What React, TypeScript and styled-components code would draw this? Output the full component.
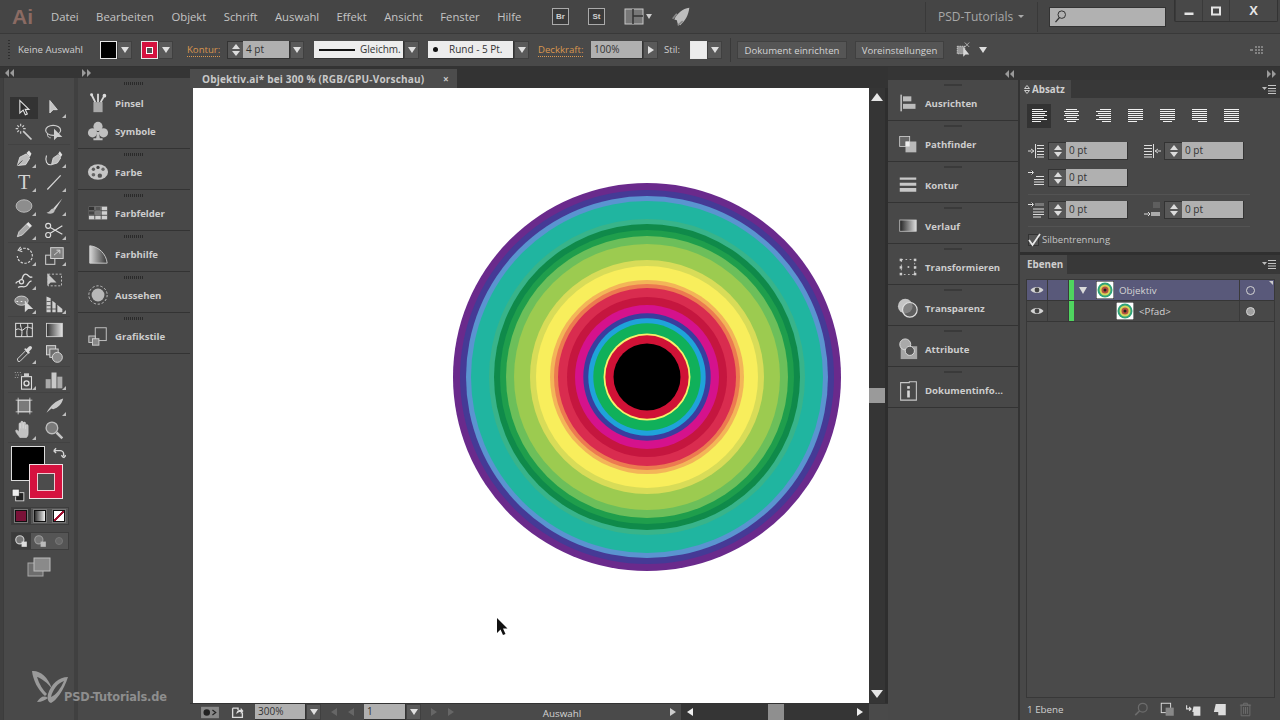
import React from "react";
import styled, { createGlobalStyle } from "styled-components";

const Global = createGlobalStyle`
  html, body { margin: 0; padding: 0; background: #3c3c3c; overflow: hidden; }
  * { box-sizing: border-box; }
`;

const FONT = `"Open Sans", "Noto Sans", "Liberation Sans", sans-serif`;

const Root = styled.div`
  position: relative;
  width: 1280px;
  height: 720px;
  display: flex;
  flex-direction: column;
  overflow: hidden;
  font-family: ${FONT};
  color: #c8c8c8;
  background: #3c3c3c;
`;

/* ---------- menu bar ---------- */
const MenuBar = styled.header`
  height: 33px;
  flex: none;
  display: flex;
  align-items: center;
  background: #454545;
  position: relative;
`;
const AiLogo = styled.span`
  width: 51px;
  padding-left: 12px;
  font: bold 21px "Liberation Sans", sans-serif;
  color: #8b6b63;
  flex: none;
`;
const MenuList = styled.nav`
  display: flex;
  gap: 17.4px;
  font-size: 11.3px;
  color: #c4c4c4;
  width: 487px;
  flex: none;
`;
const BridgeGroup = styled.div`
  display: flex;
  align-items: center;
  gap: 19px;
  width: 387px;
  flex: none;
  padding-left: 14px;
`;
const BadgeIcon = styled.span`
  width: 17px;
  height: 17px;
  border: 1px solid #aaa;
  background: #3a3a3a;
  font: bold 8px "Liberation Sans", sans-serif;
  color: #cfcfcf;
  display: flex;
  align-items: center;
  justify-content: center;
  flex: none;
`;
const VDivider = styled.span<{ $h?: number; $ml?: number }>`
  width: 1px;
  height: ${(p) => p.$h ?? 30}px;
  margin-left: ${(p) => p.$ml ?? 0}px;
  background: #393939;
  flex: none;
`;
const Workspace = styled.span`
  margin-left: 12px;
  width: 99px;
  flex: none;
  font-size: 12px;
  color: #a8a8a8;
  display: flex;
  align-items: center;
  justify-content: space-between;
  padding-right: 13px;
`;
const WorkspaceTri = styled.i`
  display: block;
  flex: none;
  border-left: 3px solid transparent;
  border-right: 3px solid transparent;
  border-top: 3px solid #aaa;
`;
const SearchBox = styled.div`
  margin-left: 11px;
  width: 117px;
  height: 20px;
  background: #b1b1b1;
  border: 1px solid #333;
  display: flex;
  align-items: center;
  padding-left: 3px;
  flex: none;
`;
const WindowButtons = styled.div`
  position: absolute;
  left: 1174px;
  top: 0;
  display: flex;
  height: 22px;
  background: #484848;
  border: 1px solid #333;
  border-top: none;
  border-radius: 0 0 2px 2px;
`;
const WinBtn = styled.div<{ $w: number }>`
  width: ${(p) => p.$w}px;
  display: flex;
  align-items: center;
  justify-content: center;
  border-left: 1px solid #3a3a3a;
  color: #e6e6e6;
  font: bold 13px "Liberation Sans", sans-serif;
`;

/* ---------- control bar ---------- */
const ControlBar = styled.div`
  height: 34px;
  flex: none;
  display: flex;
  align-items: center;
  background: #494949;
  border-top: 1px solid #393939;
  border-bottom: 1px solid #333;
  font-size: 9.6px;
  position: relative;
`;
const Grip = styled.span`
  margin-left: 8px;
  width: 2px;
  height: 20px;
  flex: none;
  background: repeating-linear-gradient(#2e2e2e 0 1px, transparent 1px 3px);
`;
const CtlLabel = styled.span<{ $ml?: number; $w?: number; $accent?: boolean }>`
  margin-left: ${(p) => p.$ml ?? 0}px;
  margin-top: -2px;
  width: ${(p) => (p.$w ? `${p.$w}px` : "auto")};
  flex: none;
  white-space: nowrap;
  color: ${(p) => (p.$accent ? "#d9964f" : "#cfcfcf")};
  span { ${(p) => (p.$accent ? "border-bottom: 1px dotted #d9964f;" : "")} }
`;
const Swatch = styled.span<{ $bg: string; $ml?: number; $w?: number }>`
  margin-left: ${(p) => p.$ml ?? 0}px;
  width: ${(p) => p.$w ?? 17}px;
  height: 18px;
  flex: none;
  background: ${(p) => p.$bg};
  border: 1px solid #e8e8e8;
  position: relative;
  display: flex;
  align-items: center;
  justify-content: center;
`;
const StrokeHole = styled.span`
  width: 7px;
  height: 7px;
  border: 1px solid #fff;
  background: #555;
`;
const Drop = styled.span<{ $w?: number; $h?: number; $right?: boolean }>`
  width: ${(p) => p.$w ?? 15}px;
  height: ${(p) => p.$h ?? 18}px;
  flex: none;
  background: #5a5a5a;
  border: 1px solid #404040;
  display: flex;
  align-items: center;
  justify-content: center;
  &::after {
    content: "";
    ${(p) =>
      p.$right
        ? "border-top: 4px solid transparent; border-bottom: 4px solid transparent; border-left: 6px solid #e0e0e0;"
        : "border-left: 4px solid transparent; border-right: 4px solid transparent; border-top: 6px solid #e0e0e0;"}
  }
`;
const SpinnerBox = styled.span<{ $w?: number }>`
  width: ${(p) => p.$w ?? 18}px;
  height: 18px;
  flex: none;
  background: #585858;
  border: 1px solid #333;
  border-right: none;
  display: flex;
  flex-direction: column;
  align-items: center;
  justify-content: space-around;
  padding: 1px 0;
`;
const TriUp = styled.i`
  display: block;
  border-left: 4px solid transparent;
  border-right: 4px solid transparent;
  border-bottom: 5px solid #dcdcdc;
`;
const TriDown = styled.i`
  display: block;
  border-left: 4px solid transparent;
  border-right: 4px solid transparent;
  border-top: 5px solid #dcdcdc;
`;
const InputBox = styled.span<{ $w: number; $light?: boolean; $h?: number; $ml?: number }>`
  width: ${(p) => p.$w}px;
  height: ${(p) => p.$h ?? 18}px;
  margin-left: ${(p) => p.$ml ?? 0}px;
  flex: none;
  background: ${(p) => (p.$light ? "#ececec" : "#b0b0b0")};
  color: #333;
  font-size: 10px;
  line-height: ${(p) => (p.$h ?? 18) - 1}px;
  padding-left: 3px;
  display: flex;
  align-items: center;
  white-space: nowrap;
  border-bottom: 1px solid #333;
  border-right: 1px solid #333;
`;
const StrokeLine = styled.span`
  width: 36px;
  height: 2px;
  background: #111;
  margin: 0 5px 0 2px;
  flex: none;
`;
const Dot = styled.span`
  width: 5px;
  height: 5px;
  background: #111;
  border-radius: 50%;
  margin: 0 11px 0 2px;
  flex: none;
`;
const CtlButton = styled.span<{ $w: number; $ml: number }>`
  width: ${(p) => p.$w}px;
  margin-left: ${(p) => p.$ml}px;
  height: 18px;
  flex: none;
  background: #555;
  border: 1px solid #404040;
  color: #d4d4d4;
  display: flex;
  align-items: center;
  justify-content: center;
  white-space: nowrap;
`;
const IsolateSlot = styled.span`
  margin-left: 11px;
  flex: none;
`;
const SmallTri = styled.i<{ $ml: number }>`
  margin-left: ${(p) => p.$ml}px;
  flex: none;
  display: block;
  border-left: 4px solid transparent;
  border-right: 4px solid transparent;
  border-top: 6px solid #ddd;
`;
const CtlMenu = styled.span`
  position: absolute;
  right: 16px;
  top: 12px;
  display: flex;
`;

/* ---------- main ---------- */
const Main = styled.div`
  flex: 1;
  display: flex;
  min-height: 0;
  position: relative;
`;
const ToolColumn = styled.aside`
  width: 78px;
  flex: none;
  display: flex;
  flex-direction: column;
  background: #404040;
`;
const DockStrip = styled.div<{ $h: number; $align?: string; $pad?: number }>`
  height: ${(p) => p.$h}px;
  flex: none;
  background: #353535;
  display: flex;
  align-items: center;
  justify-content: ${(p) => p.$align ?? "flex-start"};
  padding: 0 ${(p) => p.$pad ?? 6}px;
`;
const ToolPanel = styled.div`
  width: 71px;
  margin-left: 3px;
  flex: 1;
  background: #494949;
  border-left: 1px solid #3c3c3c;
  padding: 18px 4px 0 4px;
`;
const ToolGroup = styled.div`
  display: grid;
  grid-template-columns: 30px 30px;
  grid-auto-rows: 24px;
  justify-content: center;
  margin-bottom: 1px;
  border-bottom: 1px solid #424242;
`;
const Tool = styled.div<{ $corner?: boolean; $active?: boolean }>`
  position: relative;
  display: flex;
  align-items: center;
  justify-content: center;
  ${(p) => (p.$active ? "background: #333; margin: 1px 1px 1px 1px;" : "")}
  ${(p) =>
    p.$corner
      ? `&::after { content: ""; position: absolute; right: 3px; bottom: 2px; width: 0; height: 0;
          border-left: 4px solid transparent; border-bottom: 4px solid #bcbcbc; }`
      : ""}
`;
const TypeGlyph = styled.span`
  font: 20px "Liberation Serif", serif;
  color: #d4d4d4;
  line-height: 24px;
`;
const SwatchStack = styled.div`
  position: relative;
  height: 59px;
  margin-top: 3px;
`;
const FillBig = styled.span`
  position: absolute;
  left: 3px;
  top: 0;
  width: 34px;
  height: 35px;
  background: #000;
  border: 1px solid #ddd;
`;
const StrokeBig = styled.span`
  position: absolute;
  left: 21px;
  top: 18px;
  width: 34px;
  height: 35px;
  background: #d5123f;
  border: 1px solid #f0dfe3;
  display: flex;
  align-items: center;
  justify-content: center;
`;
const StrokeBigHole = styled.span`
  width: 18px;
  height: 18px;
  background: #4c4c4c;
  border: 1px solid #f0c8d0;
`;
const SwapArrow = styled.span`
  position: absolute;
  left: 44px;
  top: 0;
`;
const DefaultColors = styled.span`
  position: absolute;
  left: 3px;
  top: 42px;
`;
const ModeRow = styled.div`
  display: flex;
  height: 18px;
  margin: 2px 1px 7px 3px;
  background: #555;
  border: 1px solid #3d3d3d;
`;
const ModeBtn = styled.span<{ $dark?: boolean }>`
  flex: 1;
  display: flex;
  align-items: center;
  justify-content: center;
  background: ${(p) => (p.$dark ? "#3b3b3b" : "transparent")};
`;
const ModeSquare = styled.span<{ $bg: string }>`
  width: 12px;
  height: 12px;
  background: ${(p) => p.$bg};
  border: 1px solid #111;
  outline: 1px solid #777;
`;
const ScreenRow = styled.div`
  display: flex;
  justify-content: center;
  margin-top: 2px;
`;

const SideDock = styled.aside<{ $w: number }>`
  width: ${(p) => p.$w}px;
  flex: none;
  display: flex;
  flex-direction: column;
  background: #333;
`;
const SidePanels = styled.div<{ $mr?: number }>`
  flex: 1;
  display: flex;
  flex-direction: column;
  margin-right: ${(p) => p.$mr ?? 0}px;
  background: #494949;
`;
const SideGroup = styled.div<{ $h: number; $pt: number }>`
  height: ${(p) => p.$h}px;
  flex: none;
  position: relative;
  border-bottom: 1px solid #333;
  padding-top: ${(p) => p.$pt}px;
  background: #484848;
  &::before {
    content: "";
    position: absolute;
    left: 50%;
    top: 4px;
    width: 20px;
    height: 3px;
    margin-left: -10px;
    background: repeating-linear-gradient(90deg, #2a2a2a 0 1px, transparent 1px 2px);
  }
`;
const SideGroupMid = styled(SideGroup)`
  &::before { background: #3a3a3a; width: 18px; margin-left: -9px; height: 2px; }
`;
const SideItem = styled.div<{ $pl: number; $gap: number }>`
  height: 28px;
  display: flex;
  align-items: center;
  padding-left: ${(p) => p.$pl}px;
  gap: ${(p) => p.$gap}px;
  font-size: 9.6px;
  font-weight: 700;
  color: #cdcdcd;
  white-space: nowrap;
  svg { flex: none; }
`;
const IconSlot = styled.span`
  width: 22px;
  flex: none;
  display: flex;
  justify-content: center;
`;

const Doc = styled.section`
  width: 698px;
  flex: none;
  display: flex;
  flex-direction: column;
  background: #333;
`;
const TabRow = styled.div`
  height: 21px;
  flex: none;
  display: flex;
  align-items: flex-end;
  background: #333;
`;
const DocTab = styled.div`
  width: 267px;
  height: 19px;
  background: #4c4c4c;
  display: flex;
  align-items: center;
  justify-content: space-between;
  padding: 0 8px 0 12px;
  font-size: 10.05px;
  font-weight: 700;
  letter-spacing: 0.18px;
  color: #c9c9c9;
  white-space: nowrap;
`;
const DocBody = styled.div`
  flex: 1;
  display: flex;
  min-height: 0;
  padding-left: 3px;
  background: #484848;
`;
const Canvas = styled.div`
  width: 676px;
  flex: none;
  position: relative;
  background: #fff;
`;
const Artwork = styled.svg`
  position: absolute;
  left: 260px;
  top: 95px;
`;
const Pointer = styled.svg`
  position: absolute;
  left: 303px;
  top: 529px;
`;
const VScroll = styled.div`
  width: 19px;
  flex: none;
  background: #353535;
  border-right: 3px solid #2e2e2e;
  display: flex;
  flex-direction: column;
  align-items: center;
  justify-content: space-between;
  position: relative;
  padding: 5px 0;
`;
const ScrollThumb = styled.span`
  position: absolute;
  left: 0;
  top: 300px;
  width: 16px;
  height: 15px;
  background: #9a9a9a;
`;
const TriUpBig = styled.i`
  display: block;
  border-left: 6px solid transparent;
  border-right: 6px solid transparent;
  border-bottom: 8px solid #e6e6e6;
`;
const TriDownBig = styled.i`
  display: block;
  border-left: 6px solid transparent;
  border-right: 6px solid transparent;
  border-top: 8px solid #e6e6e6;
`;
const StatusBar = styled.div`
  height: 17px;
  flex: none;
  display: flex;
  align-items: center;
  background: #4a4a4a;
  padding-left: 10px;
  font-size: 10px;
  border-top: 1px solid #333;
`;
const StatusIconSlot = styled.span`
  margin-left: 11px;
  flex: none;
`;
const NavTri = styled.span<{ $dir: "l" | "r"; $ml: number; $c?: string }>`
  margin-left: ${(p) => p.$ml}px;
  flex: none;
  width: 0;
  height: 0;
  border-top: 4px solid transparent;
  border-bottom: 4px solid transparent;
  ${(p) => (p.$dir === "l" ? `border-right: 6px solid ${p.$c ?? "#666"};` : `border-left: 6px solid ${p.$c ?? "#666"};`)}
`;
const StatusLabel = styled.span`
  width: 216px;
  flex: none;
  margin-top: 2px;
  text-align: center;
  color: #d4d4d4;
  font-size: 9.8px;
`;
const HScroll = styled.div`
  width: 188px;
  margin-left: 5px;
  height: 100%;
  flex: none;
  position: relative;
  background: #353535;
  display: flex;
  align-items: center;
`;
const HThumb = styled.span`
  position: absolute;
  left: 87px;
  top: 0;
  height: 100%;
  width: 16px;
  background: #8f8f8f;
`;

/* ---------- right ---------- */
const RightDock = styled.aside`
  width: 260px;
  flex: none;
  display: flex;
  flex-direction: column;
  background: #333;
`;
const PanelTabRow = styled.div<{ $h: number }>`
  height: ${(p) => p.$h}px;
  flex: none;
  display: flex;
  justify-content: space-between;
  align-items: stretch;
  background: #383838;
  padding-right: 4px;
`;
const PanelTab = styled.div<{ $w: number; $pl: number }>`
  width: ${(p) => p.$w}px;
  background: #484848;
  font-size: 9.8px;
  font-weight: 700;
  color: #cfcfcf;
  display: flex;
  align-items: center;
  padding-left: ${(p) => p.$pl}px;
  gap: 2px;
`;
const MenuIcon = styled.span`
  display: flex;
  align-items: center;
`;
const ParagraphPanel = styled.div`
  height: 157px;
  flex: none;
  background: #484848;
  padding: 6px 6px 0 8px;
  border-bottom: 3px solid #2f2f2f;
`;
const AlignRow = styled.div`
  display: flex;
  height: 24px;
  margin: 0 0 14px -1px;
`;
const AlignBtn = styled.span<{ $active?: boolean }>`
  width: 24px;
  margin-right: 8px;
  flex: none;
  display: flex;
  align-items: center;
  justify-content: center;
  background: ${(p) => (p.$active ? "#333" : "transparent")};
`;
const ParaRow = styled.div<{ $mb: number; $rule?: boolean }>`
  display: flex;
  height: 18px;
  margin-bottom: ${(p) => p.$mb}px;
  position: relative;
  ${(p) =>
    p.$rule
      ? `&::after { content: ""; position: absolute; left: 0; width: 222px; bottom: -8px; height: 1px; background: #535353; }`
      : ""}
`;
const ParaCell = styled.div`
  width: 116px;
  flex: none;
  display: flex;
  align-items: center;
`;
const ParaIcon = styled.span`
  width: 20px;
  flex: none;
  display: flex;
  justify-content: flex-start;
`;
const CheckRow = styled.div`
  display: flex;
  align-items: center;
  gap: 3px;
  font-size: 9.5px;
  color: #c4c4c4;
`;
const CheckBox = styled.span`
  width: 11px;
  height: 12px;
  flex: none;
  background: #555;
  border: 1px solid #333;
  display: flex;
  align-items: center;
  justify-content: center;
  svg { overflow: visible; flex: none; }
`;
const LayersPanel = styled.div`
  flex: 1;
  display: flex;
  flex-direction: column;
  background: #484848;
  min-height: 0;
`;
const LayerList = styled.div`
  flex: 1;
  margin: 5px 5px 0 6px;
  border: 1px solid #383838;
  background: #4a4a4a;
`;
const LayerRow = styled.div<{ $sel?: boolean }>`
  height: 21px;
  display: flex;
  align-items: center;
  position: relative;
  background: ${(p) => (p.$sel ? "#59597a" : "#484848")};
  border-bottom: 1px solid #363636;
  font-size: 9.8px;
  color: #d4d4d4;
`;
const EyeCell = styled.span`
  width: 21px;
  height: 100%;
  flex: none;
  display: flex;
  align-items: center;
  justify-content: center;
  border-right: 1px solid #3a3a3a;
`;
const LockCell = styled.span`
  width: 21px;
  height: 100%;
  flex: none;
  border-right: 1px solid #3a3a3a;
`;
const ColorBar = styled.span`
  width: 5px;
  height: 100%;
  flex: none;
  background: #4fd45f;
  margin-right: 5px;
`;
const Expander = styled.span`
  width: 0;
  height: 0;
  flex: none;
  margin: 0 9px 0 0;
  border-left: 4px solid transparent;
  border-right: 4px solid transparent;
  border-top: 7px solid #dadada;
`;
const Indent = styled.span`
  width: 37px;
  flex: none;
`;
const Thumb = styled.svg`
  flex: none;
  margin-right: 5px;
`;
const TargetCell = styled.span`
  position: absolute;
  right: 0;
  top: 0;
  bottom: 0;
  width: 35px;
  padding-right: 14px;
  border-left: 1px solid #3a3a3a;
  display: flex;
  align-items: center;
  justify-content: center;
`;
const TargetDot = styled.span<{ $fill?: boolean }>`
  width: 9px;
  height: 9px;
  border-radius: 50%;
  border: 1px solid #d4d4d4;
  background: ${(p) => (p.$fill ? "#a0a0a0" : "transparent")};
`;
const SelCorner = styled.span`
  position: absolute;
  right: 1px;
  top: 1px;
  width: 0;
  height: 0;
  border-top: 4px solid #ccc;
  border-left: 4px solid transparent;
`;
const LayerFooter = styled.div`
  height: 22px;
  flex: none;
  display: flex;
  align-items: center;
  font-size: 9.8px;
  color: #cfcfcf;
  padding-left: 7px;
`;
const FooterCount = styled.span`
  width: 36px;
  flex: none;
  white-space: nowrap;
`;
const FooterIcons = styled.div`
  margin-left: 71px;
  display: flex;
  gap: 11px;
`;
const Watermark = styled.div`
  position: absolute;
  left: 31px;
  top: 601px;
  display: flex;
  align-items: flex-end;
  pointer-events: none;
`;
const WatermarkText = styled.span`
  font: bold 11.4px "DejaVu Sans", sans-serif;
  letter-spacing: -0.15px;
  color: #8e8e8e;
  margin-left: -5px;
  margin-bottom: 0;
  line-height: 14px;
`;

/* ---------- icons ---------- */
const C = "#cdcdcd";
const Svg: React.FC<{ s?: number; w?: number; h?: number; vb?: string; children: React.ReactNode }> = ({ s = 22, w, h, vb = "0 0 24 24", children }) => (
  <svg width={w ?? s} height={h ?? s} viewBox={vb} style={{ display: "block" }}>
    {children}
  </svg>
);

const toolIcons: Record<string, React.ReactNode> = {
  select: <path d="M7 3v15l4-3.5 2.6 5.6 2.4-1-2.6-5.5H18z" fill="#2d2d2d" stroke="#e2e2e2" strokeWidth="1.3" />,
  direct: <path d="M7 3v15l4-4 5 0z" fill="#c4c4c4" stroke="#ddd" strokeWidth="1" />,
  wand: (
    <g stroke={C} strokeWidth="1.4" fill="none">
      <path d="M11 11l10 10" strokeWidth="2" />
      <path d="M8 2v3M8 11v3M2 8h3M11 8h3M4 4l2 2M12 4l-2 2M4 12l2-2" />
    </g>
  ),
  lasso: (
    <g>
      <ellipse cx="11" cy="10" rx="9" ry="6" fill="none" stroke={C} strokeWidth="1.4" />
      <path d="M4 14c0 4 2 5 4 5" fill="none" stroke={C} strokeWidth="1.2" />
      <path d="M12 8v14l4-4h6z" fill={C} />
    </g>
  ),
  pen: (
    <g>
      <path d="M4 21l3-10 8-4 4 5-5 8z" fill="#bdbdbd" stroke="#e0e0e0" strokeWidth="1" />
      <path d="M15 7l3-3 3 4-2 4M4 21l6-6" fill="none" stroke="#3c3c3c" strokeWidth="1" />
      <path d="M15 6l3-3 3 4-2 4z" fill="#e0e0e0" />
    </g>
  ),
  curvature: (
    <g>
      <path d="M9 20l2-8 6-4 3 4-4 6z" fill="#bdbdbd" stroke="#ddd" />
      <path d="M17 7l2-3 3 4-2 3z" fill="#e0e0e0" />
      <path d="M9 20C3 21 1 15 3 9" fill="none" stroke="#ddd" strokeWidth="1.3" />
    </g>
  ),
  line: <path d="M4 21L20 4" stroke="#d6d6d6" strokeWidth="1.5" />,
  ellipse: <ellipse cx="12" cy="12" rx="9.5" ry="7.5" fill="#8d8d8d" stroke="#c4c4c4" strokeWidth="1" />,
  brush: (
    <g>
      <path d="M22 3L11 15l2 2z" fill="#d6d6d6" />
      <path d="M11 15c-3 0-3 4-8 5 3 2 9 2 10-3z" fill="#bdbdbd" />
    </g>
  ),
  pencil: (
    <g>
      <path d="M4 20l2-6L17 3l4 4L10 18z" fill="#a8a8a8" stroke="#ddd" strokeWidth="1" />
      <path d="M15 5l4 4 2-2-4-4z" fill="#e6e6e6" />
    </g>
  ),
  scissors: (
    <g fill="none" stroke="#dedede" strokeWidth="1.4">
      <circle cx="5" cy="7" r="3" />
      <circle cx="5" cy="18" r="3" />
      <path d="M7.5 9L22 17M7.5 16L22 7" />
    </g>
  ),
  rotate: (
    <g fill="none" stroke="#d2d2d2" strokeWidth="1.4">
      <path d="M7 5a9 9 0 1 1-3 7" strokeDasharray="3 1.6" />
      <path d="M8 1L5 5l5 2" />
    </g>
  ),
  scale: (
    <g fill="none" stroke="#d2d2d2" strokeWidth="1.2">
      <rect x="2" y="11" width="11" height="11" />
      <rect x="8" y="2" width="15" height="13" fill="#7f7f7f" />
      <path d="M12 11l7-6M15 5h4v4" />
    </g>
  ),
  warp: (
    <g fill="none" stroke="#dcdcdc" strokeWidth="1.5">
      <path d="M2 16c3-5 5-1 7-4s1-7 5-7 4 6 8 3" />
      <path d="M5 21c3-3 7 1 10-2s2-5 6-6" />
      <circle cx="9" cy="14" r="2.5" fill="#4a4a4a" />
    </g>
  ),
  free: (
    <g>
      <rect x="5" y="5" width="16" height="14" fill="none" stroke="#d0d0d0" strokeDasharray="2.5 2" />
      <path d="M4 4v15l4-4h7z" fill="#c8c8c8" />
    </g>
  ),
  builder: (
    <g>
      <ellipse cx="9" cy="8" rx="8" ry="5.5" fill="#8b8b8b" stroke="#ddd" />
      <path d="M3 9h2M8 9h2M13 9h1" stroke="#fff" />
      <path d="M13 8v14l4-4h6z" fill="#d8d8d8" />
    </g>
  ),
  grid: (
    <g fill="#d0d0d0">
      <path d="M3 3l5 2v17H3zM10 8l4 3v11h-4zM16 13l6 5v4h-6z" />
      <path d="M3 9h5M3 14h5M3 18h12" stroke="#4a4a4a" />
    </g>
  ),
  mesh: (
    <g fill="none" stroke="#e0e0e0" strokeWidth="1.2">
      <rect x="2" y="4" width="20" height="16" fill="#404040" />
      <path d="M2 12c5-4 6 3 10-1s5-2 10-1M8 4c-1 5 3 6 1 16M16 4c2 5-2 7 0 16" />
    </g>
  ),
  gradient: (
    <g>
      <defs>
        <linearGradient id="tg" x1="0" x2="1">
          <stop offset="0" stopColor="#2f2f2f" />
          <stop offset="1" stopColor="#e4e4e4" />
        </linearGradient>
      </defs>
      <rect x="3" y="4" width="19" height="16" fill="url(#tg)" stroke="#d8d8d8" />
    </g>
  ),
  dropper: (
    <g>
      <path d="M5 21l-1-3L14 8l3 3L7 21z" fill="#494949" stroke="#ddd" strokeWidth="1.1" />
      <path d="M12 6l6 6 1-2-1-1 3-3a2 2 0 0 0-3-3l-3 3-1-1z" fill="#d8d8d8" />
    </g>
  ),
  blend: (
    <g stroke="#ddd" strokeWidth="1.1">
      <rect x="3" y="2" width="11" height="11" fill="#7e7e7e" />
      <rect x="7" y="6" width="10" height="10" fill="#6c6c6c" />
      <circle cx="16" cy="16" r="6" fill="#8a8a8a" />
    </g>
  ),
  spray: (
    <g>
      <rect x="9" y="8" width="12" height="15" fill="none" stroke="#ddd" strokeWidth="1.3" />
      <circle cx="15" cy="16" r="3" fill="none" stroke="#ddd" strokeWidth="1.6" />
      <rect x="12" y="4" width="6" height="4" fill="#ccc" />
      <path d="M1 3h1M4 3h1M7 3h1M2 6h1M5 6h1M8 6h1M1 9h1M4 9h1" stroke="#ccc" />
    </g>
  ),
  graph: (
    <g fill="#aaa">
      <rect x="2" y="11" width="6" height="11" />
      <rect x="9" y="3" width="6" height="19" fill="#c8c8c8" />
      <rect x="16" y="8" width="6" height="14" />
    </g>
  ),
  artboard: (
    <g>
      <rect x="5" y="5" width="14" height="14" fill="#7a7a7a" stroke="#ddd" />
      <path d="M2 5h20M2 19h20M5 2v20M19 2v20" stroke="#ddd" strokeWidth="0.9" />
    </g>
  ),
  slice: <path d="M3 20C8 11 14 6 23 3c-1 6-6 11-12 13l-2-1z" fill="#c8c8c8" />,
  hand: (
    <path d="M7 21c-2-3-5-6-5-8s2-1 4 1V5c0-2 2-2 2 0v5-7c0-2 3-2 3 0v7-6c0-2 3-2 3 0v7-4c0-2 3-2 3 0v9c0 3-1 4-2 5z" fill="#c2c2c2" stroke="#ddd" strokeWidth=".6" />
  ),
  zoom: (
    <g>
      <circle cx="9.5" cy="9.5" r="7" fill="#7a7a7a" stroke="#bdbdbd" strokeWidth="1.6" />
      <path d="M15 15l7 7" stroke="#c6c6c6" strokeWidth="3" />
    </g>
  ),
};

const toolGroups: [string, boolean][][] = [
  [["select", false], ["direct", true], ["wand", false], ["lasso", false]],
  [["pen", true], ["curvature", true], ["type", true], ["line", true], ["ellipse", true], ["brush", true], ["pencil", true], ["scissors", true]],
  [["rotate", true], ["scale", true], ["warp", true], ["free", false], ["builder", true], ["grid", true]],
  [["mesh", false], ["gradient", false], ["dropper", true], ["blend", false]],
  [["spray", true], ["graph", true]],
  [["artboard", false], ["slice", true], ["hand", true], ["zoom", false]],
];

const rings: [number, string][] = [
  [194, "#6a2a8c"], [187, "#453a96"], [181, "#5a94d0"], [176, "#20b5a0"], [158, "#38b48a"],
  [153, "#0f8a4a"], [147, "#1f9e4c"], [141, "#6cbf5a"], [133, "#9ccb50"], [117, "#d8dc58"],
  [111, "#f8ee5c"], [97, "#f3b558"], [93, "#ec7a50"], [89, "#d92c4f"], [80, "#c5163f"], [72, "#d5128c"],
  [63.7, "#3a3d9e"], [58.7, "#1fa3da"], [53.7, "#10b05a"], [43.5, "#f6f26a"], [41.7, "#d01236"], [33.5, "#000"],
];

const grip = (
  <svg width="10" height="8" viewBox="0 0 10 8">
    <path d="M4 0v8L0 4zM9 0v8L5 4z" fill="#9a9a9a" />
  </svg>
);
const gripR = (
  <svg width="10" height="8" viewBox="0 0 10 8">
    <path d="M1 0v8l4-4zM6 0v8l4-4z" fill="#9a9a9a" />
  </svg>
);

const Gr: React.FC<{ id: string; a?: string; b?: string }> = ({ id, a = "#222", b = "#ddd" }) => (
  <defs>
    <linearGradient id={id} x1="0" x2="1">
      <stop offset="0" stopColor={a} />
      <stop offset="1" stopColor={b} />
    </linearGradient>
  </defs>
);

const leftDock: { name: string; icon: React.ReactNode }[][] = [
  [
    {
      name: "Pinsel",
      icon: (
        <Svg>
          <rect x="7" y="11" width="10" height="11" fill="#a8a8a8" />
          <path d="M9 11L5 3M12 11V2M15 11l4-7" stroke="#d8d8d8" strokeWidth="2" />
          <circle cx="19" cy="4" r="2" fill="#ddd" />
          <circle cx="5" cy="3" r="1.6" fill="#ddd" />
        </Svg>
      ),
    },
    {
      name: "Symbole",
      icon: (
        <Svg>
          <circle cx="12" cy="7" r="5" fill="#c0c0c0" />
          <circle cx="6" cy="14" r="5" fill="#c0c0c0" />
          <circle cx="18" cy="14" r="5" fill="#c0c0c0" />
          <path d="M11 13h2l1 7h3v2H7v-2h3z" fill="#c0c0c0" />
        </Svg>
      ),
    },
  ],
  [
    {
      name: "Farbe",
      icon: (
        <Svg>
          <ellipse cx="12" cy="12" rx="11" ry="8.5" fill="#c6c6c6" />
          <circle cx="7" cy="9" r="1.8" fill="#5a5a5a" />
          <circle cx="12" cy="7" r="1.8" fill="#444" />
          <circle cx="17.5" cy="9" r="1.8" fill="#666" />
          <circle cx="7" cy="15" r="2" fill="#666" />
          <circle cx="14" cy="16" r="2.4" fill="#555" />
        </Svg>
      ),
    },
  ],
  [
    {
      name: "Farbfelder",
      icon: (
        <Svg>
          <rect x="2" y="5" width="20" height="14" fill="#d0d0d0" />
          <rect x="2" y="5" width="6" height="4" fill="#333" />
          <rect x="9" y="5" width="6" height="4" fill="#555" />
          <rect x="2" y="10" width="6" height="4" fill="#444" />
          <rect x="9" y="10" width="6" height="4" fill="#777" />
          <path d="M8.5 5v14M15.5 5v14M2 9.5h20M2 14.5h20" stroke="#4a4a4a" />
        </Svg>
      ),
    },
  ],
  [
    {
      name: "Farbhilfe",
      icon: (
        <Svg>
          <Gr id="fh" a="#d8d8d8" b="#333" />
          <path d="M3 3c10 1 18 9 19 19H3z" fill="url(#fh)" stroke="#cfcfcf" />
        </Svg>
      ),
    },
  ],
  [
    {
      name: "Aussehen",
      icon: (
        <Svg>
          <circle cx="12" cy="12" r="10" fill="none" stroke="#c8c8c8" strokeDasharray="2.5 2" />
          <circle cx="12" cy="12" r="7" fill="#b8b8b8" />
        </Svg>
      ),
    },
  ],
  [
    {
      name: "Grafikstile",
      icon: (
        <Svg>
          <rect x="9" y="3" width="12" height="14" fill="none" stroke="#c8c8c8" />
          <rect x="2" y="12" width="7" height="7" fill="#6a6a6a" stroke="#d0d0d0" />
          <rect x="6" y="15" width="7" height="7" fill="#888" stroke="#d0d0d0" />
        </Svg>
      ),
    },
  ],
];

const midDock: { name: string; icon: React.ReactNode }[] = [
  { name: "Ausrichten", icon: <Svg s={20}><rect x="3" y="2" width="1.5" height="20" fill="#ddd" /><rect x="6" y="4" width="10" height="6" fill="#bcbcbc" /><rect x="6" y="13" width="15" height="6" fill="#bcbcbc" /></Svg> },
  { name: "Pathfinder", icon: <Svg s={20}><rect x="2" y="3" width="12" height="12" fill="#666" stroke="#d0d0d0" /><rect x="9" y="9" width="13" height="13" fill="#b8b8b8" /><rect x="9" y="9" width="5" height="6" fill="#eee" /></Svg> },
  { name: "Kontur", icon: <Svg w={20} h={18}><rect x="1" y="2" width="22" height="3" fill="#c8c8c8" /><rect x="1" y="9" width="22" height="4" fill="#c8c8c8" /><rect x="1" y="16" width="22" height="5" fill="#c8c8c8" /></Svg> },
  { name: "Verlauf", icon: <Svg w={20} h={18}><Gr id="vl" a="#222" b="#ddd" /><rect x="1" y="4" width="22" height="15" fill="url(#vl)" stroke="#cfcfcf" /></Svg> },
  { name: "Transformieren", icon: <Svg s={20}><rect x="4" y="3" width="16" height="18" fill="none" stroke="#cfcfcf" strokeDasharray="2 3" /><g fill="#cfcfcf"><rect x="2" y="2" width="3" height="3" /><rect x="19" y="2" width="3" height="3" /><rect x="2" y="19" width="3" height="3" /><rect x="19" y="19" width="3" height="3" /><rect x="2" y="11" width="3" height="3" /><rect x="19" y="11" width="3" height="3" /><rect x="11.5" y="11" width="2" height="2" /></g></Svg> },
  { name: "Transparenz", icon: <Svg s={22}><circle cx="9" cy="10" r="8" fill="#c4c4c4" /><circle cx="14" cy="14" r="8" fill="#6a6a6a" fillOpacity=".7" stroke="#ddd" strokeWidth="1.3" /></Svg> },
  { name: "Attribute", icon: <Svg s={22}><rect x="4" y="9" width="18" height="14" fill="#a6a6a6" /><circle cx="9" cy="7" r="6" fill="#aaa" stroke="#ddd" /><circle cx="14" cy="14" r="5" fill="#555" stroke="#ddd" /></Svg> },
  { name: "Dokumentinfo...", icon: <Svg s={21}><path d="M3 3h10v-1h8v21H3z" fill="none" stroke="#c8c8c8" strokeWidth="1.2" /><rect x="10.5" y="7" width="3" height="3" fill="#d8d8d8" /><rect x="10.5" y="12" width="3" height="8" fill="#d8d8d8" /></Svg> },
];

const Bars: React.FC<{ lines: [number, number][] }> = ({ lines }) => (
  <svg width="15" height="14" viewBox="0 0 15 14" shapeRendering="crispEdges">
    {lines.map(([a, b], i) => (
      <rect key={i} x={a} y={i * 2} width={b - a} height="1" fill="#f0f0f0" />
    ))}
  </svg>
);
const alignSets: [number, number][][] = [
  [[0, 11], [0, 15], [0, 13], [0, 15], [0, 12], [0, 15], [0, 9]],
  [[2, 13], [0, 15], [1, 14], [0, 15], [2, 13], [0, 15], [3, 12]],
  [[4, 15], [0, 15], [2, 15], [0, 15], [3, 15], [0, 15], [6, 15]],
  [[0, 15], [0, 15], [0, 15], [0, 15], [0, 15], [0, 15], [0, 9]],
  [[0, 15], [0, 15], [0, 15], [0, 15], [0, 15], [0, 15], [3, 12]],
  [[0, 15], [0, 15], [0, 15], [0, 15], [0, 15], [0, 15], [6, 15]],
  [[0, 15], [0, 15], [0, 15], [0, 15], [0, 15], [0, 15], [0, 15]],
];

const paraIcon = (kind: number) => (
  <svg width="18" height="16" viewBox="0 0 18 16">
    {kind === 0 && (
      <g stroke="#ddd">
        <path d="M0 8h5M3 6l3 2-3 2M7.5 1v14" />
        <path d="M9 2.5h7M9 5.5h7M9 8.5h7M9 11.5h7M9 14h7" />
      </g>
    )}
    {kind === 1 && (
      <g stroke="#ddd">
        <path d="M0 2.5h8M0 5.5h8M0 8.5h8M0 11.5h8M0 14h8M9.5 1v14M17 8h-5M14 6l-3 2 3 2" />
      </g>
    )}
    {kind === 2 && (
      <g stroke="#ddd">
        <path d="M0 2.5h5M3.5 .5l2 2-2 2" />
        <path d="M8 6.5h8M6 9.5h10M6 12h10M6 14.5h10" />
      </g>
    )}
    {kind === 3 && (
      <g stroke="#ddd">
        <path d="M0 2.5h5M3.5 .5l2 2-2 2" />
        <rect x="7" y="1" width="9" height="3" fill="#777" stroke="none" />
        <path d="M5 7h11M5 10h11M5 12.5h11M5 15h8" />
      </g>
    )}
    {kind === 4 && (
      <g stroke="#ddd">
        <rect x="9" y="0" width="7" height="6" fill="#5e5e5e" stroke="none" />
        <path d="M0 12h6M4 10l2 2-2 2" />
        <rect x="7" y="10" width="9" height="4" fill="#aaa" stroke="none" />
      </g>
    )}
  </svg>
);

const NumField: React.FC<{ icon: number }> = ({ icon }) => (
  <ParaCell>
    <ParaIcon>{paraIcon(icon)}</ParaIcon>
    <SpinnerBox>
      <TriUp />
      <TriDown />
    </SpinnerBox>
    <InputBox $w={62}>0 pt</InputBox>
  </ParaCell>
);

const LayerThumb: React.FC = () => (
  <Thumb width="18" height="18" viewBox="0 0 18 18">
    <rect width="18" height="18" fill="#fff" stroke="#111" />
    <circle cx="9" cy="9" r="7.5" fill="#2fa37a" />
    <circle cx="9" cy="9" r="5.5" fill="#d3d65c" />
    <circle cx="9" cy="9" r="3.5" fill="#b5513f" />
    <circle cx="9" cy="9" r="1.5" fill="#222" />
  </Thumb>
);
const Eye: React.FC = () => (
  <svg width="14" height="10" viewBox="0 0 14 10">
    <path d="M0.5 5C3 1 11 1 13.5 5 11 9 3 9 .5 5z" fill="#d4d4d4" />
    <circle cx="7" cy="5" r="2.4" fill="#444" />
  </svg>
);
const PanelMenu: React.FC = () => (
  <MenuIcon>
    <svg width="14" height="9" viewBox="0 0 14 9">
      <path d="M0 2h5L2.500 5z" fill="#bbb" />
      <path d="M6 .5h8M6 3.500h8M6 6h8M6 8.500h8" stroke="#c4c4c4" />
    </svg>
  </MenuIcon>
);

export default function App() {
  return (
    <Root>
      <Global />
      <MenuBar>
        <AiLogo>Ai</AiLogo>
        <MenuList>
          {["Datei", "Bearbeiten", "Objekt", "Schrift", "Auswahl", "Effekt", "Ansicht", "Fenster", "Hilfe"].map((m) => (
            <span key={m}>{m}</span>
          ))}
        </MenuList>
        <BridgeGroup>
          <BadgeIcon>Br</BadgeIcon>
          <BadgeIcon>St</BadgeIcon>
          <Svg w={28} h={18} vb="0 0 28 18">
            <rect x="1" y="1" width="18" height="15" fill="#777" stroke="#c8c8c8" />
            <path d="M9 1v15M9 8h10" stroke="#333" strokeWidth="1.5" />
            <path d="M22 6h6l-3 5z" fill="#ccc" />
          </Svg>
          <Svg w={20} h={20}>
            <path d="M22 1C14 2 7 8 4 15l3 1 1 4 3 2c6-5 10-12 11-21z" fill="#bdbdbd" />
            <path d="M2 14l5-6M8 22l6-5" stroke="#888" strokeWidth="2" />
          </Svg>
        </BridgeGroup>
        <VDivider />
        <Workspace>
          PSD-Tutorials
          <WorkspaceTri />
        </Workspace>
        <VDivider />
        <SearchBox>
          <Svg s={15}>
            <circle cx="14" cy="9" r="6" fill="none" stroke="#333" strokeWidth="1.6" />
            <path d="M10 14l-6 7" stroke="#333" strokeWidth="2" />
          </Svg>
        </SearchBox>
        <WindowButtons>
          <WinBtn $w={27}>
            <Svg s={12}><rect x="3" y="15" width="18" height="5" fill="#e4e4e4" /></Svg>
          </WinBtn>
          <WinBtn $w={27}>
            <Svg s={12}><rect x="4" y="5" width="16" height="14" fill="none" stroke="#e4e4e4" strokeWidth="4" /></Svg>
          </WinBtn>
          <WinBtn $w={48}>X</WinBtn>
        </WindowButtons>
      </MenuBar>

      <ControlBar>
        <Grip />
        <CtlLabel $ml={8} $w={82}>Keine Auswahl</CtlLabel>
        <Swatch $bg="#000" />
        <Drop />
        <Swatch $bg="#d5123f" $ml={9}><StrokeHole /></Swatch>
        <Drop />
        <CtlLabel $ml={14} $w={40} $accent><span>Kontur:</span></CtlLabel>
        <SpinnerBox $w={16}><TriUp /><TriDown /></SpinnerBox>
        <InputBox $w={47}>4 pt</InputBox>
        <Drop $w={14} />
        <InputBox $w={90} $light $ml={10}>
          <StrokeLine />
          Gleichm.
        </InputBox>
        <Drop />
        <InputBox $w={86} $light $ml={9}>
          <Dot />
          Rund - 5 Pt.
        </InputBox>
        <Drop />
        <CtlLabel $ml={9} $w={53} $accent><span>Deckkraft:</span></CtlLabel>
        <InputBox $w={52}>100%</InputBox>
        <Drop $right />
        <CtlLabel $ml={6} $w={26}>Stil:</CtlLabel>
        <Swatch $bg="#ececec" $w={17} />
        <Drop />
        <VDivider $h={24} $ml={8} />
        <CtlButton $w={110} $ml={6}>Dokument einrichten</CtlButton>
        <CtlButton $w={89} $ml={8}>Voreinstellungen</CtlButton>
        <IsolateSlot>
          <Svg s={18}>
            <rect x="3" y="7" width="10" height="10" fill="#999" stroke="#ddd" strokeDasharray="2 1" />
            <path d="M11 8v13l3-3h5z" fill="#d8d8d8" />
            <path d="M13 2l6 6M19 2l-6 6" stroke="#ccc" />
          </Svg>
        </IsolateSlot>
        <SmallTri $ml={6} />
        <CtlMenu>
          <svg width="14" height="9" viewBox="0 0 14 9">
            <path d="M0 4h3" stroke="#bbb" />
            <path d="M5 1h9M5 4h9M5 7h9" stroke="#bbb" strokeDasharray="2 1" />
          </svg>
        </CtlMenu>
      </ControlBar>

      <Main>
        <ToolColumn>
          <DockStrip $h={11} $pad={5}>{grip}</DockStrip>
          <ToolPanel>
            {toolGroups.map((g, i) => (
              <ToolGroup key={i}>
                {g.map(([name, corner]) => (
                  <Tool key={name} $corner={corner} $active={name === "select"}>
                    {name === "type" ? <TypeGlyph>T</TypeGlyph> : <Svg s={20}>{toolIcons[name]}</Svg>}
                  </Tool>
                ))}
              </ToolGroup>
            ))}
            <SwatchStack>
              <FillBig />
              <StrokeBig><StrokeBigHole /></StrokeBig>
              <SwapArrow>
                <Svg s={14}>
                  <path d="M3 8h11a6 6 0 0 1 6 6v3M3 8l4-4M3 8l4 4M20 20l-4-4M20 20l4-4" fill="none" stroke="#d4d4d4" strokeWidth="2.4" />
                </Svg>
              </SwapArrow>
              <DefaultColors>
                <Svg s={14}>
                  <rect x="8" y="8" width="14" height="14" fill="#222" stroke="#ddd" strokeWidth="1.5" />
                  <rect x="2" y="2" width="12" height="12" fill="#eee" stroke="#222" />
                </Svg>
              </DefaultColors>
            </SwatchStack>
            <ModeRow>
              <ModeBtn $dark><ModeSquare $bg="#7a1238" /></ModeBtn>
              <ModeBtn><ModeSquare $bg="linear-gradient(90deg,#333,#eee)" /></ModeBtn>
              <ModeBtn><ModeSquare $bg="linear-gradient(135deg,#fff 0 42%,#a01030 42% 58%,#fff 58%)" /></ModeBtn>
            </ModeRow>
            <ModeRow>
              <ModeBtn $dark>
                <Svg s={14}><circle cx="10" cy="10" r="7" fill="#777" stroke="#ccc" strokeWidth="2" /><rect x="13" y="13" width="9" height="9" fill="#ddd" /></Svg>
              </ModeBtn>
              <ModeBtn>
                <Svg s={14}><circle cx="10" cy="10" r="7" fill="#777" stroke="#999" strokeWidth="2" /><rect x="13" y="13" width="9" height="9" fill="#bbb" /></Svg>
              </ModeBtn>
              <ModeBtn>
                <Svg s={12}><circle cx="12" cy="12" r="7" fill="#666" stroke="#777" strokeWidth="2" /></Svg>
              </ModeBtn>
            </ModeRow>
            <ScreenRow>
              <Svg w={24} h={20} vb="0 0 24 20">
                <rect x="1" y="6" width="15" height="13" fill="#6d6d6d" stroke="#a8a8a8" />
                <rect x="7" y="1" width="16" height="13" fill="#8a8a8a" stroke="#bdbdbd" />
              </Svg>
            </ScreenRow>
          </ToolPanel>
        </ToolColumn>

        <SideDock $w={112}>
          <DockStrip $h={11} $pad={3}>{gripR}</DockStrip>
          <SidePanels>
            {leftDock.map((g, i) => (
              <SideGroup key={i} $h={i === 0 ? 71 : 41} $pt={i === 0 ? 11 : 9}>
                {g.map((it) => (
                  <SideItem key={it.name} $pl={9} $gap={6}>
                    {it.icon}
                    {it.name}
                  </SideItem>
                ))}
              </SideGroup>
            ))}
          </SidePanels>
        </SideDock>

        <Doc>
          <TabRow>
            <DocTab>
              Objektiv.ai* bei 300 % (RGB/GPU-Vorschau)
              <span>×</span>
            </DocTab>
          </TabRow>
          <DocBody>
            <Canvas>
              <Artwork width="388" height="388" viewBox="-194 -194 388 388">
                {rings.map(([r, c]) => (
                  <circle key={r} r={r} fill={c} />
                ))}
              </Artwork>
              <Pointer width="12" height="20" viewBox="0 0 12 20">
                <path d="M1 1v15l3.500-3.500L7 18l2.500-1L7 11.500h4.500z" fill="#111" />
              </Pointer>
            </Canvas>
            <VScroll>
              <TriUpBig />
              <ScrollThumb />
              <TriDownBig />
            </VScroll>
          </DocBody>
          <StatusBar>
            <Svg w={20} h={13} vb="0 0 24 16">
              <rect x="1" y="1" width="22" height="14" fill="#888" />
              <circle cx="8" cy="8" r="4" fill="#222" />
              <path d="M15 5l4 3-4 3" stroke="#222" strokeWidth="1.5" fill="none" />
            </Svg>
            <StatusIconSlot>
              <Svg s={13}>
                <path d="M3 4h10v4M21 12v9H3V4" fill="none" stroke="#ddd" strokeWidth="2.500" />
                <path d="M10 15c0-6 4-8 8-8V3l5 6-5 6v-4c-3 0-6 1-8 4z" fill="#ddd" />
              </Svg>
            </StatusIconSlot>
            <InputBox $w={51} $h={16} $ml={11}>300%</InputBox>
            <Drop $w={15} $h={16} />
            <NavTri $dir="l" $ml={10} />
            <NavTri $dir="l" $ml={11} />
            <InputBox $w={42} $h={16} $ml={10}>1</InputBox>
            <Drop $w={15} $h={16} />
            <NavTri $dir="r" $ml={10} />
            <NavTri $dir="r" $ml={11} />
            <StatusLabel>Auswahl</StatusLabel>
            <NavTri $dir="r" $ml={0} $c="#ccc" />
            <HScroll>
              <NavTri $dir="l" $ml={6} $c="#eee" />
              <HThumb />
              <NavTri $dir="r" $ml={164} $c="#eee" />
            </HScroll>
          </StatusBar>
        </Doc>

        <SideDock $w={132}>
          <DockStrip $h={13} $align="flex-end" $pad={5}>{grip}</DockStrip>
          <SidePanels $mr={2}>
            {midDock.map((it) => (
              <SideGroupMid key={it.name} $h={41} $pt={9}>
                <SideItem $pl={9} $gap={6}>
                  <IconSlot>{it.icon}</IconSlot>
                  {it.name}
                </SideItem>
              </SideGroupMid>
            ))}
          </SidePanels>
        </SideDock>

        <RightDock>
          <DockStrip $h={13} $align="flex-end" $pad={4}>{gripR}</DockStrip>
          <PanelTabRow $h={18}>
            <PanelTab $w={51} $pl={4}>
              <svg width="6" height="9" viewBox="0 0 6 9"><path d="M3 .5l2.500 3H.5zM3 8.500l2.500-3H.5z" fill="none" stroke="#ccc" /></svg>
              Absatz
            </PanelTab>
            <PanelMenu />
          </PanelTabRow>
          <ParagraphPanel>
            <AlignRow>
              {alignSets.map((l, i) => (
                <AlignBtn key={i} $active={i === 0}><Bars lines={l} /></AlignBtn>
              ))}
            </AlignRow>
            <ParaRow $mb={9}><NumField icon={0} /><NumField icon={1} /></ParaRow>
            <ParaRow $mb={14} $rule><NumField icon={2} /></ParaRow>
            <ParaRow $mb={14} $rule><NumField icon={3} /><NumField icon={4} /></ParaRow>
            <CheckRow>
              <CheckBox>
                <svg width="14" height="14" viewBox="0 0 14 14"><path d="M2 7l3.500 5L13 1" fill="none" stroke="#e8e8e8" strokeWidth="1.800" /></svg>
              </CheckBox>
              Silbentrennung
            </CheckRow>
          </ParagraphPanel>
          <PanelTabRow $h={19}>
            <PanelTab $w={47} $pl={7}>Ebenen</PanelTab>
            <PanelMenu />
          </PanelTabRow>
          <LayersPanel>
            <LayerList>
              <LayerRow $sel>
                <EyeCell><Eye /></EyeCell>
                <LockCell />
                <ColorBar />
                <Expander />
                <LayerThumb />
                Objektiv
                <TargetCell><TargetDot /></TargetCell>
                <SelCorner />
              </LayerRow>
              <LayerRow>
                <EyeCell><Eye /></EyeCell>
                <LockCell />
                <ColorBar />
                <Indent />
                <LayerThumb />
                &lt;Pfad&gt;
                <TargetCell><TargetDot $fill /></TargetCell>
              </LayerRow>
            </LayerList>
            <LayerFooter>
              <FooterCount>1 Ebene</FooterCount>
              <FooterIcons>
                <Svg s={15}>
                  <circle cx="14" cy="9" r="7" fill="none" stroke="#6c6c6c" strokeWidth="2" />
                  <path d="M9 14l-7 7" stroke="#6c6c6c" strokeWidth="2.500" />
                </Svg>
                <Svg s={15}>
                  <rect x="2" y="2" width="15" height="15" fill="#444" stroke="#ddd" strokeWidth="1.500" />
                  <rect x="9" y="9" width="13" height="13" fill="#888" />
                </Svg>
                <Svg s={15}>
                  <path d="M1 5v6h7M5 8l3 3-3 3" fill="none" stroke="#ddd" strokeWidth="1.800" />
                  <path d="M12 7h11v15H12v-6l-2 0z" fill="#ddd" />
                </Svg>
                <Svg s={15}>
                  <path d="M6 3h16v18H10v-5H3z" fill="#ddd" />
                </Svg>
                <Svg s={15}>
                  <path d="M3 5h18M9 5V2h6v3M5 5h14v17H5zM9 8v11M12 8v11M15 8v11" fill="none" stroke="#6c6c6c" strokeWidth="1.600" />
                </Svg>
              </FooterIcons>
            </LayerFooter>
          </LayersPanel>
        </RightDock>

        <Watermark>
          <svg width="38" height="36" viewBox="0 0 38 36">
            <path fillRule="evenodd" fill="#9a9a9a" d="M37 9C28 9 20 16 17 26 16 31 17 34 20 35 25 33 33 22 37 9ZM33 13C27 15 22 21 20 29 25 27 30 20 33 13Z" />
            <path fill="#9a9a9a" d="M1 3C8 2 17 8 21 21 17 15 10 10 6 9 8 16 12 22 16 26L14 28C7 22 2 12 1 3Z" />
            <path fill="#9a9a9a" d="M6 34C9 29 13 27 17 30 14 32 11 34 6 34Z" />
          </svg>
          <WatermarkText>PSD-Tutorials.de</WatermarkText>
        </Watermark>
      </Main>
    </Root>
  );
}
